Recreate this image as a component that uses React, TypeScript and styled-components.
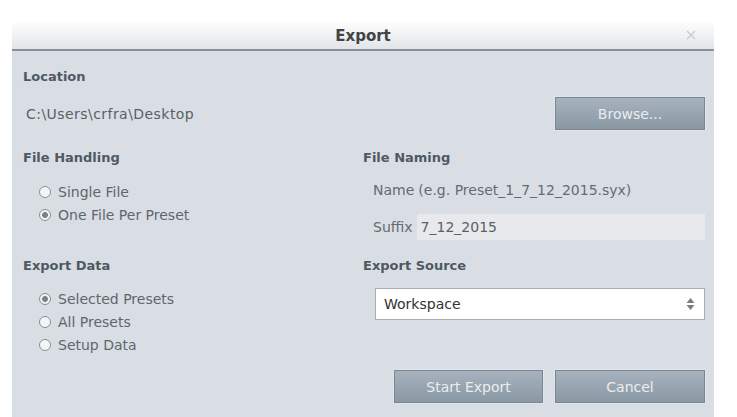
import React from 'react';
import styled, { createGlobalStyle } from 'styled-components';

const GlobalStyle = createGlobalStyle`
  html, body {
    margin: 0;
    padding: 0;
    background: #ffffff;
  }
  body {
    font-family: "DejaVu Sans", Verdana, sans-serif;
  }
`;

const Page = styled.div`
  padding: 22px 23px 0 12px;
  width: 737px;
  height: 417px;
  box-sizing: border-box;
  overflow: hidden;
`;

const Dialog = styled.div`
  width: 702px;
  height: 395px;
  display: flex;
  flex-direction: column;
  background: #d9dee5;
`;

const TitleBar = styled.div`
  height: 27px;
  flex: none;
  display: flex;
  align-items: center;
  justify-content: center;
  position: relative;
  background: linear-gradient(#fdfdfe, #e2e5e8);
  border-bottom: 2px solid #8b9095;
`;

const Title = styled.div`
  font-size: 15px;
  font-weight: bold;
  color: #404447;
`;

const Close = styled.svg`
  position: absolute;
  right: 18px;
  top: 8px;
`;

const Body = styled.div`
  flex: 1;
  padding: 17px 9px 0 11px;
`;

const Heading = styled.div`
  font-size: 13px;
  font-weight: bold;
  line-height: 18px;
  color: #4f5962;
`;

const LocationRow = styled.div`
  margin-top: 11px;
  display: flex;
  align-items: center;
  justify-content: space-between;
`;

const PathText = styled.div`
  font-size: 14px;
  color: #5a5f64;
  padding-left: 3px;
  letter-spacing: 0.45px;
`;

const Button = styled.button<{ $w: number }>`
  width: ${p => p.$w}px;
  height: 33px;
  box-sizing: border-box;
  border: 1px solid #7a8792;
  background: linear-gradient(#a6b3be, #8a98a4);
  color: #e9edf0;
  font-family: "DejaVu Sans", Verdana, sans-serif;
  font-size: 14px;
  padding: 0;
  box-shadow: 0 0 0 1px #e1e5ea;
`;

const Grid = styled.div`
  margin-top: 19px;
  display: grid;
  grid-template-columns: 340px 342px;
  grid-template-rows: 108px auto;
`;

const Cell = styled.div``;

const RadioList = styled.div<{ $top: number }>`
  margin-top: ${p => p.$top}px;
  padding-left: 16px;
`;

const RadioRow = styled.label`
  display: flex;
  align-items: center;
  height: 23px;
  font-size: 14px;
  color: #60676c;
`;

const RadioCircle = styled.span<{ $on?: boolean }>`
  width: 12px;
  height: 12px;
  box-sizing: border-box;
  border-radius: 50%;
  border: 1px solid #8a8f94;
  background: ${p => (p.$on ? 'radial-gradient(circle, #7c8186 0 2.6px, #f2f3f4 3.2px)' : '#f4f5f6')};
  margin-right: 7px;
  flex: none;
`;

const FieldRow = styled.div<{ $top: number }>`
  margin-top: ${p => p.$top}px;
  height: 26px;
  display: flex;
  align-items: center;
  padding-left: 10px;
  font-size: 14px;
  color: #656b70;
`;

const Label = styled.span`
  margin-right: 4px;
`;

const SuffixInput = styled.div`
  flex: 1;
  align-self: stretch;
  background: #e7e9ec;
  display: flex;
  align-items: center;
  padding-left: 4px;
  color: #5a6065;
`;

const Select = styled.div`
  margin: 13px 0 0 12px;
  height: 32px;
  box-sizing: border-box;
  background: #ffffff;
  border: 1px solid #a9aeb3;
  display: flex;
  align-items: center;
  justify-content: space-between;
  padding: 0 9px 0 8px;
  font-size: 14px;
  color: #2f3336;
`;

const Footer = styled.div`
  margin-top: 50px;
  display: flex;
  justify-content: flex-end;
  gap: 12px;
`;

function Radio({ on, children }: { on?: boolean; children: React.ReactNode }) {
  return (
    <RadioRow>
      <RadioCircle $on={on} />
      {children}
    </RadioRow>
  );
}

export default function App() {
  return (
    <Page>
      <GlobalStyle />
      <Dialog>
        <TitleBar>
          <Title>Export</Title>
          <Close width="10" height="10" viewBox="0 0 10 10">
            <path d="M1 1 L9 9 M9 1 L1 9" stroke="#c6cacd" strokeWidth="1.2" />
          </Close>
        </TitleBar>
        <Body>
          <Heading>Location</Heading>
          <LocationRow>
            <PathText>C:\Users\crfra\Desktop</PathText>
            <Button $w={150}>Browse...</Button>
          </LocationRow>
          <Grid>
            <Cell>
              <Heading>File Handling</Heading>
              <RadioList $top={13}>
                <Radio>Single File</Radio>
                <Radio on>One File Per Preset</Radio>
              </RadioList>
            </Cell>
            <Cell>
              <Heading>File Naming</Heading>
              <FieldRow $top={10}>
                <Label>Name</Label>(e.g. Preset_1_7_12_2015.syx)
              </FieldRow>
              <FieldRow $top={11}>
                <Label>Suffix</Label>
                <SuffixInput>7_12_2015</SuffixInput>
              </FieldRow>
            </Cell>
            <Cell>
              <Heading>Export Data</Heading>
              <RadioList $top={12}>
                <Radio on>Selected Presets</Radio>
                <Radio>All Presets</Radio>
                <Radio>Setup Data</Radio>
              </RadioList>
            </Cell>
            <Cell>
              <Heading>Export Source</Heading>
              <Select>
                Workspace
                <svg width="9" height="14" viewBox="0 0 9 14">
                  <path d="M4.5 1 L8.5 6 H0.5 Z" fill="#7a7f84" />
                  <path d="M4.5 13 L8.5 8 H0.5 Z" fill="#7a7f84" />
                </svg>
              </Select>
              <Footer>
                <Button $w={149}>Start Export</Button>
                <Button $w={150}>Cancel</Button>
              </Footer>
            </Cell>
          </Grid>
        </Body>
      </Dialog>
    </Page>
  );
}
